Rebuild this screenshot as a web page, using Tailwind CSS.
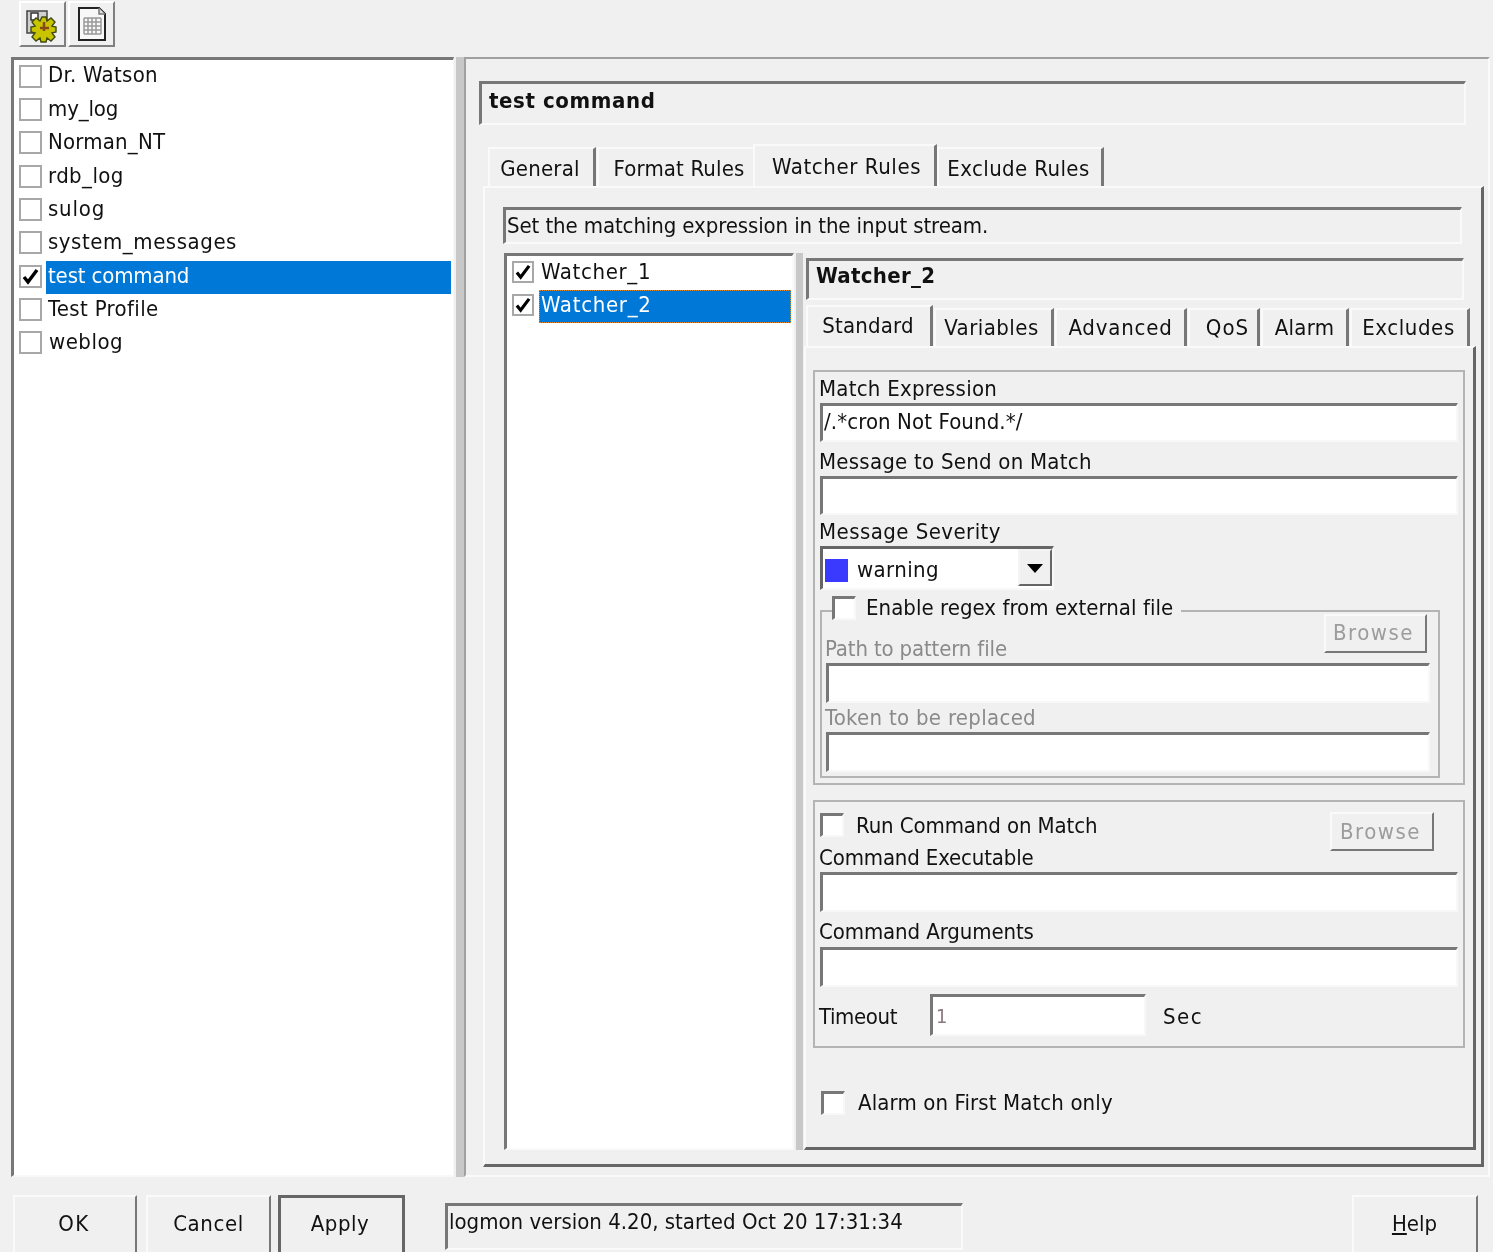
<!DOCTYPE html>
<html><head><meta charset="utf-8"><script src="https://cdn.jsdelivr.net/npm/@tailwindcss/browser@4"></script></head>
<body class="m-0 bg-[#f0f0f0]">
<div class="w-[1493px] h-[1252px] overflow-hidden bg-[#f0f0f0] text-[#111] text-[22px] leading-[28px] font-['DejaVu_Sans_Condensed','DejaVu_Sans',sans-serif] [font-stretch:condensed] blur-[0.6px]">
  <!-- toolbar -->
  <div class="h-[57px] pt-[1px] pl-[19px] flex gap-[2px] items-start">
    <div class="w-[47px] h-[46px] border-2 border-t-white border-l-white border-r-[#808080] border-b-[#808080]">
      <svg width="43" height="42" viewBox="0 0 43 42"><rect x="6" y="8" width="20" height="22" fill="#d0d0d0" stroke="#444" stroke-width="1.5"/><rect x="10" y="10" width="7" height="7" fill="#fff" stroke="#333" stroke-width="1.5"/><path d="M21 14l4 0 1 4 4-3 4 4-3 4 4 1 0 5-4 1 3 4-4 4-4-3-1 4-5 0-1-4-4 3-4-4 3-4-4-1 0-5 4-1-3-4 4-4 4 3z" fill="#c9c400" stroke="#3f4a10" stroke-width="1.4"/><path d="M23 19v9M19 25h9" stroke="#8a4a18" stroke-width="2.5"/></svg>
    </div>
    <div class="w-[47px] h-[46px] border-2 border-t-white border-l-white border-r-[#808080] border-b-[#808080] flex items-center justify-center">
      <svg width="32" height="36" viewBox="0 0 32 36"><path d="M3 2h20l6 6v26H3z" fill="#f8f8f8" stroke="#222" stroke-width="2"/><path d="M23 2v6h6" fill="#ddd" stroke="#777" stroke-width="1.5"/><path d="M8 12h17M8 16h17M8 20h17M8 24h17M8 28h17M8 12v16M12 12v16M16 12v16M20 12v16M25 12v16" fill="none" stroke="#999" stroke-width="1.5"/></svg>
    </div>
  </div>
  <!-- main -->
  <div class="flex h-[1120px] pl-[11px]">
    <!-- profile list -->
    <div class="w-[443px] h-full bg-white border-[3px] border-t-[#777] border-l-[#777] border-r-[#f8f8f8] border-b-[#f8f8f8] pt-[1px] pr-[2px] border-r-[1px] border-b-[2px]">
      <div class="h-[33.33px] pl-[5px] flex items-center gap-[4px]"><span class="mb-[3px] w-[23px] h-[23px] border-2 border-[#a8a8a8] bg-white"></span><span class="mb-[5px] pl-[2px] tracking-[0.3px]">Dr. Watson</span></div>
      <div class="h-[33.33px] pl-[5px] flex items-center gap-[4px]"><span class="mb-[3px] w-[23px] h-[23px] border-2 border-[#a8a8a8] bg-white"></span><span class="mb-[4px] pl-[2px] tracking-[-0.15px]">my_log</span></div>
      <div class="h-[33.33px] pl-[5px] flex items-center gap-[4px]"><span class="mb-[3px] w-[23px] h-[23px] border-2 border-[#a8a8a8] bg-white"></span><span class="mb-[4px] pl-[2px] tracking-[0.2px]">Norman_NT</span></div>
      <div class="h-[33.33px] pl-[5px] flex items-center gap-[4px]"><span class="mb-[3px] w-[23px] h-[23px] border-2 border-[#a8a8a8] bg-white"></span><span class="mb-[4px] pl-[2px] tracking-[0.4px]">rdb_log</span></div>
      <div class="h-[33.33px] pl-[5px] flex items-center gap-[4px]"><span class="mb-[3px] w-[23px] h-[23px] border-2 border-[#a8a8a8] bg-white"></span><span class="mb-[4px] pl-[2px] tracking-[0.8px]">sulog</span></div>
      <div class="h-[33.33px] pl-[5px] flex items-center gap-[4px]"><span class="mb-[3px] w-[23px] h-[23px] border-2 border-[#a8a8a8] bg-white"></span><span class="mb-[4px] pl-[2px] tracking-[0.55px]">system_messages</span></div>
      <div class="h-[33.33px] pl-[5px] flex items-center gap-[4px]"><span class="mb-[3px] w-[23px] h-[23px] border-2 border-[#a8a8a8] bg-white flex items-center justify-center"><svg width="17" height="17" viewBox="0 0 17 17"><path d="M2 9l4 5 9-12" fill="none" stroke="#000" stroke-width="3.4"/></svg></span><span class="pl-[2px] pb-[4px] flex-1 h-full bg-[#0078d7] text-white flex items-center tracking-[-0.15px]">test command</span></div>
      <div class="h-[33.33px] pl-[5px] flex items-center gap-[4px]"><span class="mb-[3px] w-[23px] h-[23px] border-2 border-[#a8a8a8] bg-white"></span><span class="mb-[4px] pl-[2px] tracking-[0.35px]">Test Profile</span></div>
      <div class="h-[33.33px] pl-[5px] flex items-center gap-[4px]"><span class="mb-[3px] w-[23px] h-[23px] border-2 border-[#a8a8a8] bg-white"></span><span class="mb-[4px] pl-[3px] tracking-[0.5px]">weblog</span></div>
    </div>
    <div class="w-[8px] ml-[2px] bg-[#c8c8c8]"></div>
    <!-- right panel -->
    <div class="w-[1026px] h-full border-2 border-t-[#a0a0a0] border-l-[#a0a0a0] border-r-[#fafafa] border-b-[#fafafa]">
      <div class="ml-[13px] mt-[22px] w-[987px] h-[44px] border-[3px] border-t-[#777] border-l-[#777] border-r-[#fafafa] border-b-[#fafafa] border-r-[2px] border-b-[2px] pl-[7px] pt-[2px] font-bold leading-[30px] tracking-[0.6px]">test command</div>
      <!-- tabs -->
      <div class="ml-[22px] mt-[19px] h-[42px] flex items-end">
        <div class="w-[108px] h-[39px] pt-[6px] text-center border-l-2 border-t-2 border-l-[#fafafa] border-t-[#fafafa] border-r-[3px] border-r-[#777] pr-[3px] tracking-[0.2px]">General</div>
        <div class="ml-[1px] w-[156px] h-[39px] pt-[6px] pl-[6px] text-center border-l-2 border-t-2 border-l-[#fafafa] border-t-[#fafafa] tracking-[0.15px]">Format Rules</div>
        <div class="w-[184px] h-[42px] pt-[7px] pl-[4px] text-center border-l-2 border-t-2 border-l-[#fafafa] border-t-[#fafafa] border-r-[3px] border-r-[#777] tracking-[0.6px]">Watcher Rules</div>
        <div class="w-[167px] h-[39px] pt-[6px] pr-[3px] text-center border-l-2 border-t-2 border-l-[#fafafa] border-t-[#fafafa] border-r-[3px] border-r-[#777] tracking-[0.4px]">Exclude Rules</div>
      </div>
      <!-- outer tab panel -->
      <div class="ml-[17px] w-[1001px] h-[981px] border-2 border-t-[#fafafa] border-l-[#fafafa] border-r-[3px] border-b-[3px] border-r-[#666] border-b-[#666] pt-[19px] pl-[18px]">
        <div class="w-[959px] h-[37px] border-[3px] border-t-[#777] border-l-[#777] border-r-[#fafafa] border-b-[#fafafa] border-r-[2px] border-b-[2px] pl-[1px] pt-[1px] leading-[30px] tracking-[-0.1px]">Set the matching expression in the input stream.</div>
        <div class="mt-[9px] flex h-[897px]">
          <!-- watcher list -->
          <div class="ml-[1px] w-[290px] h-full bg-white border-[3px] border-t-[#777] border-l-[#777] border-r-[#fafafa] border-b-[#fafafa] border-r-[2px] border-b-[2px] pt-[1px] pl-[5px]">
            <div class="h-[33px] flex items-center gap-[5px]"><span class="mb-[3px] w-[22px] h-[22px] border-2 border-[#a8a8a8] flex items-center justify-center"><svg width="16" height="16" viewBox="0 0 17 17"><path d="M2 9l4 5 9-12" fill="none" stroke="#000" stroke-width="3.4"/></svg></span><span class="mb-[4px] pl-[2px] tracking-[0.65px]">Watcher_1</span></div>
            <div class="h-[33px] flex items-center gap-[5px]"><span class="mb-[3px] w-[22px] h-[22px] border-2 border-[#a8a8a8] flex items-center justify-center"><svg width="16" height="16" viewBox="0 0 17 17"><path d="M2 9l4 5 9-12" fill="none" stroke="#000" stroke-width="3.4"/></svg></span><span class="w-[252px] h-full pl-[1px] pb-[4px] bg-[#0078d7] text-white flex items-center border border-dotted border-[#e08a2a] tracking-[0.7px]">Watcher_2</span></div>
          </div>
          <div class="w-[7px] ml-[2px] bg-[#c8c8c8]"></div>
          <!-- right col -->
          <div class="ml-[1px] w-[672px] pt-[5px]">
            <div class="ml-[2px] w-[658px] h-[42px] border-[3px] border-t-[#777] border-l-[#777] border-r-[#fafafa] border-b-[#fafafa] border-r-[2px] border-b-[2px] pl-[7px] font-bold leading-[30px] tracking-[0.3px]">Watcher_2</div>
            <div class="mt-[5px] ml-[2px] h-[41px] flex items-end">
              <div class="w-[127px] h-[41px] pt-[5px] pr-[2px] text-center border-l-2 border-t-2 border-l-[#fafafa] border-t-[#fafafa] border-r-[3px] border-r-[#777] tracking-[0.2px]">Standard</div>
              <div class="ml-[1px] w-[120px] h-[38px] pt-[4px] pr-[4px] text-center border-l-2 border-t-2 border-l-[#fafafa] border-t-[#fafafa] border-r-[3px] border-r-[#777] tracking-[0.45px]">Variables</div>
              <div class="ml-[1px] w-[132px] h-[38px] pt-[4px] text-center border-l-2 border-t-2 border-l-[#fafafa] border-t-[#fafafa] border-r-[3px] border-r-[#777] tracking-[0.8px]">Advanced</div>
              <div class="ml-[1px] w-[72px] h-[38px] pt-[4px] pl-[8px] text-center border-l-2 border-t-2 border-l-[#fafafa] border-t-[#fafafa] border-r-[3px] border-r-[#777] tracking-[1px]">QoS</div>
              <div class="ml-[1px] w-[88px] h-[38px] pt-[4px] text-center border-l-2 border-t-2 border-l-[#fafafa] border-t-[#fafafa] border-r-[3px] border-r-[#777] tracking-[0.3px]">Alarm</div>
              <div class="ml-[1px] w-[120px] h-[38px] pt-[4px] pr-[2px] text-center border-l-2 border-t-2 border-l-[#fafafa] border-t-[#fafafa] border-r-[3px] border-r-[#777] tracking-[0.6px]">Excludes</div>
            </div>
            <div class="w-[672px] h-[804px] border-2 border-t-[#fafafa] border-l-[#fafafa] border-r-[3px] border-b-[3px] border-r-[#666] border-b-[#666] pt-[22px]">
              <!-- group 1 -->
              <div class="ml-[7px] w-[652px] h-[415px] border-2 border-[#b4b4b4] pl-[5px] pt-[4px]">
                <div class="h-[27px] leading-[25px] ml-[-1px] tracking-[0.25px]">Match Expression</div>
                <div class="w-[638px] h-[39px] bg-white border-[3px] border-t-[#777] border-l-[#777] border-r-[#f8f8f8] border-b-[#f8f8f8] border-r-[2px] border-b-[2px] pl-[1px] pt-[1px] leading-[30px] tracking-[0.1px]">/.*cron Not Found.*/</div>
                <div class="h-[34px] pt-[6px] ml-[-1px] tracking-[0.25px]">Message to Send on Match</div>
                <div class="w-[638px] h-[39px] bg-white border-[3px] border-t-[#777] border-l-[#777] border-r-[#f8f8f8] border-b-[#f8f8f8] border-r-[2px] border-b-[2px]"></div>
                <div class="h-[31px] pt-[3px] ml-[-1px] tracking-[0.45px]">Message Severity</div>
                <div class="w-[234px] h-[44px] bg-white border-[3px] border-t-[#666] border-l-[#666] border-r-[#f8f8f8] border-b-[#f8f8f8] border-r-[2px] border-b-[2px] flex">
                  <span class="ml-[2px] mt-[10px] w-[23px] h-[23px] bg-[#3a3aff]"></span>
                  <span class="ml-[9px] mt-[7px] tracking-[0.4px]">warning</span>
                  <span class="ml-auto w-[34px] h-[37px] border-2 border-t-[#f4f4f4] border-l-[#f4f4f4] border-r-[#666] border-b-[#666] bg-[#f0f0f0] flex items-center justify-center pt-[2px]"><svg width="18" height="11" viewBox="0 0 18 11"><path d="M1 1h16L9 10z" fill="#000"/></svg></span>
                </div>
                <!-- inner group -->
                <div class="relative mt-[20px] w-[620px] h-[168px] border-2 border-[#b4b4b4] pl-[4px] pt-[2px]">
                  <div class="absolute left-[10px] top-[-17px] flex items-center bg-[#f0f0f0] pr-[8px] h-[26px]">
                    <span class="w-[24px] h-[24px] bg-white border-[3px] border-t-[#777] border-l-[#777] border-r-[#f8f8f8] border-b-[#f8f8f8] border-r-[2px] border-b-[2px]"></span>
                    <span class="ml-[10px] tracking-[0.04px]">Enable regex from external file</span>
                  </div>
                  <div class="flex justify-between h-[49px] w-[601px]">
                    <span class="self-end text-[#8a8a8a] ml-[-1px] tracking-[-0.15px]">Path to pattern file</span>
                    <span class="w-[103px] h-[39px] border-2 border-t-[#fafafa] border-l-[#fafafa] border-r-[#777] border-b-[#777] text-[#9c9c9c] text-center leading-[33px] tracking-[1.5px] pr-[4px]">Browse</span>
                  </div>
                  <div class="w-[604px] h-[40px] bg-white border-[3px] border-t-[#777] border-l-[#777] border-r-[#f8f8f8] border-b-[#f8f8f8] border-r-[2px] border-b-[2px]"></div>
                  <div class="h-[29px] pt-[1px] text-[#8a8a8a] ml-[-1px] tracking-[0.3px]">Token to be replaced</div>
                  <div class="w-[604px] h-[40px] bg-white border-[3px] border-t-[#777] border-l-[#777] border-r-[#f8f8f8] border-b-[#f8f8f8] border-r-[2px] border-b-[2px]"></div>
                </div>
              </div>
              <!-- group 2 -->
              <div class="mt-[15px] ml-[7px] w-[652px] h-[248px] border-2 border-[#b4b4b4] pl-[5px] pt-[10px]">
                <div class="flex h-[39px] w-[614px] items-start">
                  <span class="mt-[1px] w-[24px] h-[24px] bg-white border-[3px] border-t-[#777] border-l-[#777] border-r-[#f8f8f8] border-b-[#f8f8f8] border-r-[2px] border-b-[2px]"></span>
                  <span class="ml-[12px] tracking-[-0.1px]">Run Command on Match</span>
                  <span class="ml-auto w-[104px] h-[39px] border-2 border-t-[#fafafa] border-l-[#fafafa] border-r-[#777] border-b-[#777] text-[#9c9c9c] text-center leading-[35px] tracking-[1.5px] pr-[3px]">Browse</span>
                </div>
                <div class="h-[21px] leading-[14px] ml-[-1px] tracking-[-0.15px]">Command Executable</div>
                <div class="w-[638px] h-[40px] bg-white border-[3px] border-t-[#777] border-l-[#777] border-r-[#f8f8f8] border-b-[#f8f8f8] border-r-[2px] border-b-[2px]"></div>
                <div class="h-[35px] pt-[6px] ml-[-1px] tracking-[-0.1px]">Command Arguments</div>
                <div class="w-[638px] h-[40px] bg-white border-[3px] border-t-[#777] border-l-[#777] border-r-[#f8f8f8] border-b-[#f8f8f8] border-r-[2px] border-b-[2px]"></div>
                <div class="mt-[7px] flex items-center h-[42px]">
                  <span class="w-[110px] ml-[-1px] pr-[1px] pt-[4px] tracking-[-0.4px] box-content">Timeout</span>
                  <span class="w-[216px] h-[42px] bg-white border-[3px] border-t-[#777] border-l-[#777] border-r-[#f8f8f8] border-b-[#f8f8f8] border-r-[2px] border-b-[2px] pl-[3px] pt-[3px] text-[#8a7a80] text-[20px] leading-[32px]">1</span>
                  <span class="ml-[17px] pt-[4px] tracking-[1.5px]">Sec</span>
                </div>
              </div>
              <div class="mt-[43px] ml-[15px] flex items-center h-[24px]">
                <span class="w-[24px] h-[24px] bg-white border-[3px] border-t-[#777] border-l-[#777] border-r-[#f8f8f8] border-b-[#f8f8f8] border-r-[2px] border-b-[2px]"></span>
                <span class="ml-[13px] tracking-[0.12px]">Alarm on First Match only</span>
              </div>
            </div>
          </div>
        </div>
      </div>
    </div>
  </div>
  <!-- bottom bar -->
  <div class="mt-[18px] pl-[13px] flex items-start h-[57px]">
    <div class="w-[124px] h-[60px] border-2 border-t-[#fafafa] border-l-[#fafafa] border-r-[#777] border-b-[#777] text-center leading-[54px] pr-[2px] tracking-[1.5px]">OK</div>
    <div class="ml-[9px] w-[125px] h-[60px] border-2 border-t-[#fafafa] border-l-[#fafafa] border-r-[#777] border-b-[#777] text-center leading-[54px] tracking-[0.6px]">Cancel</div>
    <div class="ml-[7px] w-[127px] h-[60px] border-[3px] border-[#666] text-center leading-[52px] pr-[3px] tracking-[0.5px]">Apply</div>
    <div class="ml-[40px] mt-[8px] w-[518px] h-[47px] border-[3px] border-t-[#777] border-l-[#777] border-r-[#fafafa] border-b-[#fafafa] border-r-[2px] border-b-[2px] pl-[1px] pt-[1px] leading-[30px]">logmon version 4.20, started Oct 20 17:31:34</div>
    <div class="ml-[389px] w-[126px] h-[60px] border-2 border-t-[#fafafa] border-l-[#fafafa] border-r-[#777] border-b-[#777] text-center leading-[54px] pr-[1px]"><span class="underline">H</span>elp</div>
  </div>
</div>
</body></html>
